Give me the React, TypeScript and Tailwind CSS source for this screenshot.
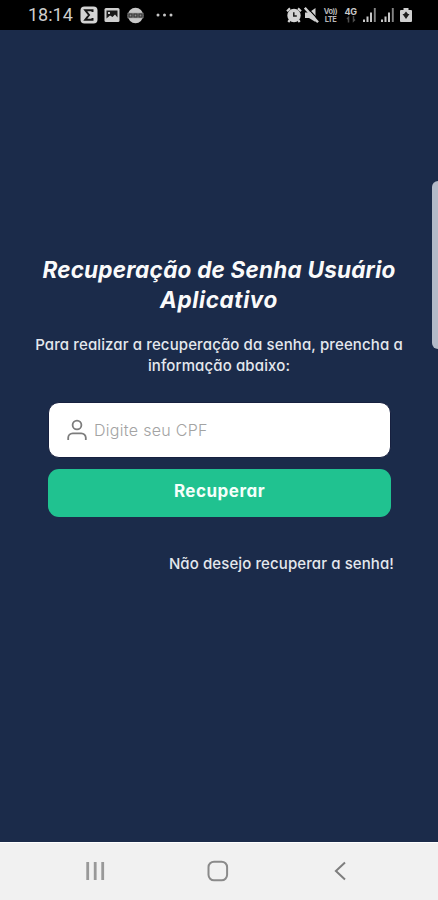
import React from 'react';

const StatusIcons: React.FC = () => (
  <div className="flex items-center">
    <svg className="w-[18px] h-[18px]" viewBox="0 0 18 18">
      <rect x="0.5" y="0.5" width="17" height="17" rx="4" fill="#d4d4d4" />
      <path d="M12.5 6V4.3H5.3L9 9l-3.7 4.7h7.2V12" fill="none" stroke="#161616" strokeWidth="2" />
    </svg>
    <svg className="ml-[6px] w-4 h-4" viewBox="0 0 16 16">
      <rect x="0.5" y="1" width="15" height="14" rx="1.5" fill="#cfcfcf" />
      <path d="M2.5 3.5h11v7L11 7.5 8.5 10 6 8.5l-3.5 3z" fill="#181818" />
      <path d="M4 5h2v2H4z" fill="#ccc" />
    </svg>
    <svg className="ml-[7px] w-[17px] h-[17px]" viewBox="0 0 17 17">
      <circle cx="8.5" cy="8.5" r="7.7" fill="#c8c8c8" />
      <path d="M0.5 5.8h16v5.4H0.5z" fill="#8b8b8b" />
      <path d="M2 7h3v3H2zM7 7h3v3H7zM12 7h3v3h-3z" fill="none" stroke="#333" strokeWidth="1.2" />
    </svg>
    <svg className="ml-[12px] w-[17px] h-4" viewBox="0 0 17 16" fill="#c6c6c6">
      <circle cx="2" cy="8" r="1.5" />
      <circle cx="8.5" cy="8" r="1.5" />
      <circle cx="15" cy="8" r="1.5" />
    </svg>
  </div>
);

const Signal: React.FC<{ className: string }> = ({ className }) => (
  <svg className={className} viewBox="0 0 14 16">
    <path d="M1 12.5V15M4.5 9.5V15M8 5.5V15" stroke="#c9c9c9" strokeWidth="2" />
    <path d="M11.8 1V15" stroke="#858585" strokeWidth="1.9" />
  </svg>
);

const SystemIcons: React.FC = () => (
  <div className="flex items-center">
    <svg className="w-4 h-4" viewBox="0 0 16 16" fill="none" stroke="#d4d4d4" strokeWidth="2.2">
      <circle cx="8" cy="8.5" r="5.6" fill="#d4d4d4" />
      <path d="M1 4.2l3-2.8M15 4.2l-3-2.8M3.8 13l-1.5 2M12.2 13l1.5 2" />
      <path d="M7.8 5.3v3.6h3" stroke="#1b1b1b" strokeWidth="1.5" />
    </svg>
    <svg className="ml-[2px] w-[15px] h-4" viewBox="0 0 15 16">
      <path d="M1 5.5h4L11.5 1v14L5 11H1z" fill="#d0d0d0" />
      <path d="M2.6 0L15 13.4" stroke="#000" strokeWidth="1.2" />
      <path d="M0.8 0.8L14 15.2" stroke="#d0d0d0" strokeWidth="2.4" />
    </svg>
    <div className="ml-[4px] w-[15px] flex flex-col text-center text-[7.5px] leading-[9px] font-bold tracking-[-0.5px] text-[#b8b8b8]">
      <span className="h-[8px]">Vo))</span>
      <span className="h-[9px]">LTE</span>
    </div>
    <div className="ml-[6px] w-[13px] flex flex-col items-center text-[9px] leading-[9px] font-bold tracking-[-0.4px] text-[#c9c9c9]">
      <span>4G</span>
      <svg className="w-[10px] h-[7px]" viewBox="0 0 10 7" fill="none" stroke="#4d4d4d" strokeWidth="1.5">
        <path d="M2.5 6.5V1.5L1 3M7.5 0v5L9 3.5" />
      </svg>
    </div>
    <Signal className="ml-[6px] w-[14px] h-4" />
    <Signal className="ml-[4px] w-[14px] h-4" />
    <svg className="ml-[5px] w-3 h-4" viewBox="0 0 12 16">
      <path d="M3.5 1h5v2H11a1 1 0 0 1 1 1v10a1 1 0 0 1-1 1H1a1 1 0 0 1-1-1V4a1 1 0 0 1 1-1h2.5z" fill="#d0d0d0" />
      <path d="M6 4.5L8 7h1.5L6 12 2.5 7H4z" fill="#1e1e1e" />
    </svg>
  </div>
);

const StatusBar: React.FC = () => (
  <header className="h-[30px] shrink-0 bg-black pl-[28px] pr-[26px] flex items-center justify-between">
    <div className="flex items-center">
      <span className="w-[52px] font-[Roboto,sans-serif] text-[18px] leading-[30px] text-[#cecece]">18:14</span>
      <StatusIcons />
    </div>
    <SystemIcons />
  </header>
);

const NavigationBar: React.FC = () => (
  <nav className="h-[58px] shrink-0 border-t border-white bg-[#f1f1f1] pb-[2px] pl-[86px] flex items-center">
    <svg className="w-[19px] h-[18px]" viewBox="0 0 19 18" stroke="#999" strokeWidth="2.8">
      <path d="M1.7 0v18M9.2 0v18M16.7 0v18" />
    </svg>
    <svg className="ml-[102px] w-[22px] h-[22px]" viewBox="0 0 22 22" fill="none" stroke="#8a8a8a" strokeWidth="2">
      <rect x="1.5" y="1.7" width="18.6" height="18.6" rx="5.5" />
    </svg>
    <svg className="ml-[105px] w-[13px] h-5" viewBox="0 0 13 20" fill="none" stroke="#7e7e7e" strokeWidth="2">
      <path d="M11 1.5L1.9 10l9.1 8.5" />
    </svg>
  </nav>
);

export default function App() {
  return (
    <div className="relative h-[900px] w-[438px] overflow-hidden bg-[#1b2b4a] flex flex-col font-[Inter,sans-serif] [font-feature-settings:'cv11']">
      <StatusBar />

      <main className="flex-1 pt-[225px] flex flex-col">
        <h1 className="text-center text-[22.5px] leading-[30px] font-bold italic tracking-[0.22px] text-[#fafafa]">
          Recuperação de Senha Usuário
          <br />
          <span className="tracking-[0.6px]">Aplicativo</span>
        </h1>
        <p className="mt-[19px] text-center text-[15px] leading-[21px] font-medium tracking-[0.12px] text-[#e4e8ee]">
          Para realizar a recuperação da senha, preencha a
          <br />
          informação abaixo:
        </p>

        <form className="mt-[26px] ml-[48px] w-[343px] flex flex-col gap-[11px]" onSubmit={(e) => e.preventDefault()}>
          <label className="h-[56px] rounded-[11px] border border-[#17203f] bg-white pl-[17px] flex items-center">
            <svg className="w-[22px] h-[22px] shrink-0" viewBox="0 0 22 22" fill="none" stroke="#7c7c7c" strokeWidth="1.8">
              <circle cx="11" cy="6" r="4.4" />
              <path d="M2.2 21v-2.2a4.5 4.5 0 0 1 4.5-4.5h8.6a4.5 4.5 0 0 1 4.5 4.5V21" />
            </svg>
            <input
              type="text"
              placeholder="Digite seu CPF"
              className="ml-[6px] w-[260px] text-[16px] font-light tracking-[0.3px] outline-none placeholder:text-[#a3a3a3]"
            />
          </label>
          <button
            type="submit"
            className="h-[48px] rounded-[11px] bg-[#20c290] pb-[3px] text-[17px] font-bold tracking-[0.5px] text-[#f5fffb]"
          >
            Recuperar
          </button>
        </form>

        <a
          href="#"
          className="mt-[36px] mr-[44px] self-end text-[15px] leading-[22px] font-medium tracking-[0.1px] text-[#e4e8ee]"
        >
          Não desejo recuperar a senha!
        </a>
      </main>

      <NavigationBar />

      {/* edge panel handle */}
      <div className="absolute right-0 top-[181px] h-[168px] w-[6px] rounded-l-[6px] bg-[#b3bac8]" />
    </div>
  );
}
